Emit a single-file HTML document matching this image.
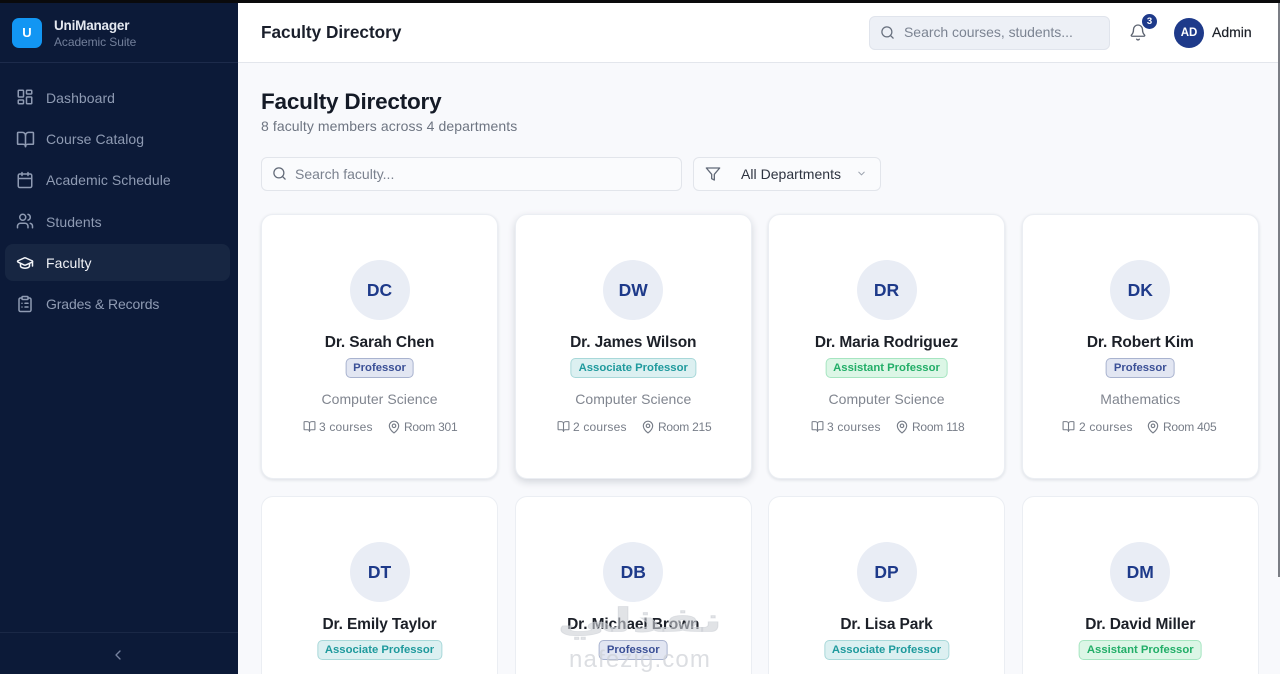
<!DOCTYPE html>
<html lang="en"><head><meta charset="utf-8"><title>Faculty Directory</title>
<style>
*{box-sizing:border-box}
html,body{margin:0;padding:0;width:1280px;height:674px;overflow:hidden}
body{background:#f8f9fc;font-family:"Liberation Sans",sans-serif;color:#151a24}
#root{position:relative;width:1280px;height:674px;overflow:hidden;background:#f8f9fc}
.a{position:absolute;white-space:nowrap}
svg{position:absolute;fill:none;stroke:currentColor;stroke-width:2;stroke-linecap:round;stroke-linejoin:round}
#side{position:absolute;left:0;top:0;width:238px;height:674px;background:#0c1a38}
.nav{position:absolute;left:46px;font-size:14px;color:#8f9bb3;letter-spacing:.06px;line-height:18px;white-space:nowrap}
.ic{color:#8f9bb3;left:16px}
.card{position:absolute;width:237px;height:265px;background:#fff;border:1px solid #ebeef3;border-radius:12px;box-shadow:0 1px 3px rgba(20,30,50,.12)}
.w2{width:236.500px}
.r2{top:496px;height:178px;border-bottom:0;border-radius:12px 12px 0 0;box-shadow:none}
.av{position:absolute;left:50%;margin-left:-30px;top:45px;width:60px;height:60px;border-radius:50%;background:#e9edf5;color:#1e3a8a;font-weight:700;font-size:17.5px;line-height:60px;text-align:center}
.nm{position:absolute;left:0;width:100%;top:118px;text-align:center;font-size:15.500px;font-weight:700;color:#1c2028;line-height:20px;letter-spacing:-.12px}
.bd{position:absolute;top:143px;left:50%;transform:translateX(-50%);height:20px;line-height:19px;padding:0 7px;border-radius:5px;font-size:11.300px;font-weight:700;white-space:nowrap;border:1px solid}
.p{background:#e2e6f2;color:#3a4f96;border-color:#a9b3cf}
.s{background:#dcf0f1;color:#1f9a9d;border-color:#a8d8d9}
.t{background:#dcf6e6;color:#22ae68;border-color:#a6e5c1}
.dp{position:absolute;left:0;width:100%;top:175px;text-align:center;font-size:14px;color:#80858f;line-height:18px;letter-spacing:.06px}
.mt{position:absolute;top:205px;font-size:12px;color:#777d88;line-height:14px;white-space:nowrap;letter-spacing:.18px}
.rm{letter-spacing:-.25px}
.mi{color:#777d88;stroke-width:2}
</style></head><body>
<div id="root">

<div class="a" style="left:0;top:0;width:1280px;height:3px;background:#0a0a0c;z-index:5"></div>

<div id="side">
<div class="a" style="left:0;top:62px;width:238px;height:1px;background:#1d2b4b"></div>
<div class="a" style="left:12px;top:18px;width:30px;height:30px;border-radius:7px;background:#1296f3;color:#fff;font-weight:700;font-size:13px;line-height:30px;text-align:center">U</div>
<div class="a" style="left:54px;top:17px;font-size:13.500px;font-weight:700;color:#e4e8f0;line-height:18px;letter-spacing:-.2px">UniManager</div>
<div class="a" style="left:54px;top:35px;font-size:12px;color:#727f9a;line-height:15px;letter-spacing:-.08px">Academic Suite</div>

<svg class="ic" style="top:88px" width="18" height="18" viewBox="0 0 24 24"><rect x="3" y="3" width="7" height="9" rx="1"/><rect x="14" y="3" width="7" height="5" rx="1"/><rect x="14" y="12" width="7" height="9" rx="1"/><rect x="3" y="16" width="7" height="5" rx="1"/></svg>
<div class="nav" style="top:89px">Dashboard</div>
<svg class="ic" style="top:130px" width="19" height="19" viewBox="0 0 24 24"><path d="M12 7v14"/><path d="M3 18a1 1 0 0 1-1-1V4a1 1 0 0 1 1-1h5a4 4 0 0 1 4 4 4 4 0 0 1 4-4h5a1 1 0 0 1 1 1v13a1 1 0 0 1-1 1h-6a3 3 0 0 0-3 3 3 3 0 0 0-3-3z"/></svg>
<div class="nav" style="top:130px">Course Catalog</div>
<svg class="ic" style="top:171px" width="18" height="18" viewBox="0 0 24 24"><path d="M8 2v4"/><path d="M16 2v4"/><rect x="3" y="4" width="18" height="18" rx="2"/><path d="M3 10h18"/></svg>
<div class="nav" style="top:171px">Academic Schedule</div>
<svg class="ic" style="top:212px" width="18" height="18" viewBox="0 0 24 24"><path d="M16 21v-2a4 4 0 0 0-4-4H6a4 4 0 0 0-4 4v2"/><circle cx="9" cy="7" r="4"/><path d="M22 21v-2a4 4 0 0 0-3-3.870"/><path d="M16 3.130a4 4 0 0 1 0 7.750"/></svg>
<div class="nav" style="top:213px">Students</div>
<div class="a" style="left:5px;top:244px;width:225px;height:37px;border-radius:8px;background:#172642"></div>
<svg class="ic" style="top:254px;color:#f2f4f8" width="18" height="18" viewBox="0 0 24 24"><path d="M21.400 10.900a1 1 0 0 0 0-1.900L12.800 5.200a2 2 0 0 0-1.700 0L2.600 9a1 1 0 0 0 0 1.800l8.500 3.900a2 2 0 0 0 1.700 0z"/><path d="M22 10v6"/><path d="M6 12.500V16a6 3 0 0 0 12 0v-3.500"/></svg>
<div class="nav" style="top:254px;color:#f0f2f7">Faculty</div>
<svg class="ic" style="top:295px" width="18" height="18" viewBox="0 0 24 24"><rect x="8" y="2" width="8" height="4" rx="1"/><path d="M16 4h2a2 2 0 0 1 2 2v14a2 2 0 0 1-2 2H6a2 2 0 0 1-2-2V6a2 2 0 0 1 2-2h2"/><path d="M12 11h4"/><path d="M12 16h4"/><path d="M8 11h.01"/><path d="M8 16h.01"/></svg>
<div class="nav" style="top:295px;letter-spacing:-.12px">Grades &amp; Records</div>
<div class="a" style="left:0;top:632px;width:238px;height:1px;background:#1a2846"></div>
<svg style="left:110px;top:647px;color:#76829e" width="16" height="16" viewBox="0 0 24 24"><path d="M15 18l-6-6 6-6"/></svg>
</div>

<div class="a" style="left:238px;top:0;width:1042px;height:63px;background:#fff;border-bottom:1px solid #e3e6ec"></div>
<div class="a" style="left:261px;top:21px;font-size:17.200px;font-weight:700;color:#1a1f2b;line-height:22px">Faculty Directory</div>
<div class="a" style="left:869px;top:16px;width:241px;height:34px;background:#edf0f6;border:1px solid #e0e4ec;border-radius:6px"></div>
<svg style="left:880px;top:25px;color:#68707e" width="15" height="15" viewBox="0 0 24 24"><circle cx="11" cy="11" r="8"/><path d="M21 21l-4.300-4.300"/></svg>
<div class="a" style="left:904px;top:23px;font-size:14px;color:#7c8492;line-height:18px;letter-spacing:-.03px">Search courses, students...</div>
<svg style="left:1129px;top:23px;color:#5c6370;stroke-width:1.800" width="18" height="19" viewBox="0 0 24 24"><path d="M10.300 21a2 2 0 0 0 3.400 0"/><path d="M3.300 15.300A1 1 0 0 0 4 17h16a1 1 0 0 0 .7-1.700C19.400 14 18 12.500 18 8A6 6 0 0 0 6 8c0 4.500-1.400 6-2.700 7.300"/></svg>
<div class="a" style="left:1142px;top:14px;width:15px;height:15px;border-radius:50%;background:#1e3a8a;color:#fff;font-size:9.500px;font-weight:700;line-height:15px;text-align:center">3</div>
<div class="a" style="left:1174px;top:18px;width:30px;height:30px;border-radius:50%;background:#1e3a8a;color:#fff;font-size:11.500px;font-weight:700;line-height:31px;text-align:center">AD</div>
<div class="a" style="left:1212px;top:23px;font-size:14px;font-weight:400;color:#1c2028;line-height:18px;-webkit-text-stroke:.2px #1c2028">Admin</div>

<div class="a" style="left:261px;top:88px;font-size:22.500px;font-weight:700;color:#141a26;line-height:28px;letter-spacing:-.2px">Faculty Directory</div>
<div class="a" style="left:261px;top:117px;font-size:14px;color:#6e7582;line-height:18px;letter-spacing:.09px">8 faculty members across 4 departments</div>

<div class="a" style="left:261px;top:157px;width:421px;height:34px;background:#fafbfd;border:1px solid #e2e5eb;border-radius:6px"></div>
<svg style="left:272px;top:166px;color:#626a78" width="15" height="15" viewBox="0 0 24 24"><circle cx="11" cy="11" r="8"/><path d="M21 21l-4.300-4.300"/></svg>
<div class="a" style="left:295px;top:165px;font-size:14px;color:#7a818e;line-height:18px">Search faculty...</div>
<div class="a" style="left:693px;top:157px;width:188px;height:34px;background:#fafbfd;border:1px solid #e2e5eb;border-radius:6px"></div>
<svg style="left:705px;top:166px;color:#626a78" width="16" height="16" viewBox="0 0 24 24"><path d="M22 3H2l8 9.460V19l4 2v-8.540z"/></svg>
<div class="a" style="left:741px;top:165px;font-size:14px;color:#2d3340;line-height:18px;letter-spacing:.03px">All Departments</div>
<svg style="left:856px;top:168px;color:#9aa1ad" width="11" height="11" viewBox="0 0 24 24"><path d="M6 9l6 6 6-6"/></svg>

<svg width="0" height="0" style="position:absolute"><defs>
<symbol id="bk" viewBox="0 0 24 24"><path d="M12 7v14"/><path d="M3 18a1 1 0 0 1-1-1V4a1 1 0 0 1 1-1h5a4 4 0 0 1 4 4 4 4 0 0 1 4-4h5a1 1 0 0 1 1 1v13a1 1 0 0 1-1 1h-6a3 3 0 0 0-3 3 3 3 0 0 0-3-3z"/></symbol>
<symbol id="pn" viewBox="0 0 24 24"><path d="M20 10c0 5-5.500 10.200-7.400 11.800a1 1 0 0 1-1.200 0C9.500 20.200 4 15 4 10a8 8 0 0 1 16 0"/><circle cx="12" cy="10" r="3"/></symbol>
</defs></svg>

<div class="card" style="left:261px;top:214px">
<div class="av">DC</div><div class="nm">Dr. Sarah Chen</div><div class="bd p">Professor</div><div class="dp">Computer Science</div>
<svg class="mi" style="left:41px;top:205px" width="13" height="13"><use href="#bk"/></svg><div class="mt" style="left:57px">3 courses</div>
<svg class="mi" style="left:125px;top:205px" width="14" height="14"><use href="#pn"/></svg><div class="mt rm" style="left:142px">Room 301</div>
</div>
<div class="card w2" style="left:515px;top:214px;box-shadow:0 3px 8px rgba(20,30,50,.16)">
<div class="av">DW</div><div class="nm">Dr. James Wilson</div><div class="bd s">Associate Professor</div><div class="dp">Computer Science</div>
<svg class="mi" style="left:41px;top:205px" width="13" height="13"><use href="#bk"/></svg><div class="mt" style="left:57px">2 courses</div>
<svg class="mi" style="left:125px;top:205px" width="14" height="14"><use href="#pn"/></svg><div class="mt rm" style="left:142px">Room 215</div>
</div>
<div class="card" style="left:768px;top:214px">
<div class="av">DR</div><div class="nm">Dr. Maria Rodriguez</div><div class="bd t">Assistant Professor</div><div class="dp">Computer Science</div>
<svg class="mi" style="left:42px;top:205px" width="13" height="13"><use href="#bk"/></svg><div class="mt" style="left:58px">3 courses</div>
<svg class="mi" style="left:126px;top:205px" width="14" height="14"><use href="#pn"/></svg><div class="mt rm" style="left:143px">Room 118</div>
</div>
<div class="card w2" style="left:1022px;top:214px">
<div class="av">DK</div><div class="nm">Dr. Robert Kim</div><div class="bd p">Professor</div><div class="dp">Mathematics</div>
<svg class="mi" style="left:39px;top:205px" width="13" height="13"><use href="#bk"/></svg><div class="mt" style="left:56px">2 courses</div>
<svg class="mi" style="left:123px;top:205px" width="14" height="14"><use href="#pn"/></svg><div class="mt rm" style="left:140px">Room 405</div>
</div>

<div class="card r2" style="left:261px">
<div class="av">DT</div><div class="nm">Dr. Emily Taylor</div><div class="bd s">Associate Professor</div>
</div>
<div class="card w2 r2" style="left:515px">
<div class="av">DB</div><div class="nm">Dr. Michael Brown</div><div class="bd p">Professor</div>
</div>
<div class="card r2" style="left:768px">
<div class="av">DP</div><div class="nm">Dr. Lisa Park</div><div class="bd s">Associate Professor</div>
</div>
<div class="card w2 r2" style="left:1022px">
<div class="av">DM</div><div class="nm">Dr. David Miller</div><div class="bd t">Assistant Professor</div>
</div>

<div class="a" dir="rtl" style="left:560px;top:590px;width:160px;height:60px;text-align:center;font-family:'DejaVu Sans',sans-serif;font-weight:700;font-size:46px;line-height:60px;color:rgba(205,208,214,.6);-webkit-text-stroke:1px rgba(205,208,214,.6);transform:scale(1.17,.72)">نفذلي</div>
<div class="a" style="left:569px;top:646px;height:28px;font-size:24px;line-height:28px;color:rgba(205,208,214,.7);letter-spacing:1.150px">nafezig.com</div>

<div class="a" style="left:1278px;top:3px;width:2px;height:574px;background:#7b7e85"></div>
</div>
</body></html>
